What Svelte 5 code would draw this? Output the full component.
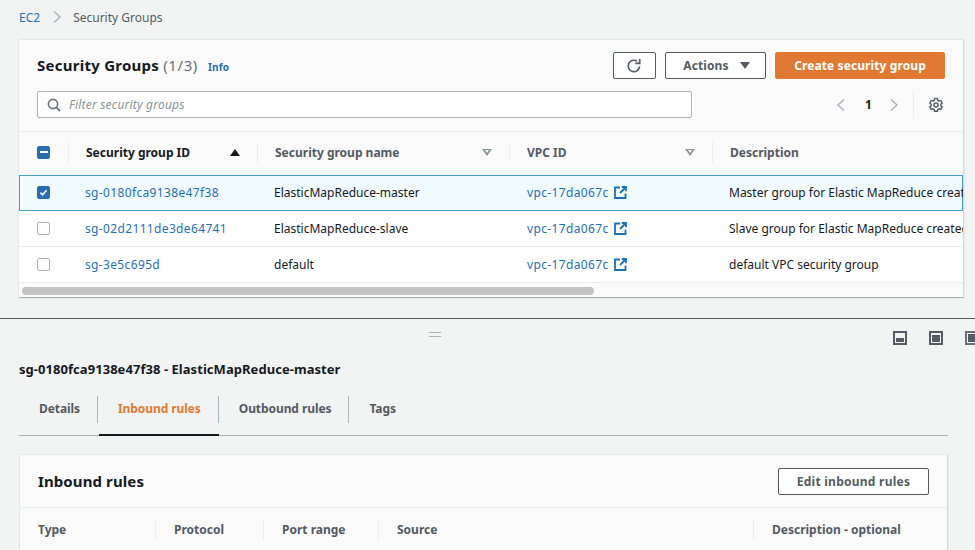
<script>
  const rows = [
    { id: 'sg-0180fca9138e47f38', name: 'ElasticMapReduce-master', desc: 'Master group for Elastic MapReduce created by EMR', sel: true },
    { id: 'sg-02d2111de3de64741', name: 'ElasticMapReduce-slave', desc: 'Slave group for Elastic MapReduce created by EMR', sel: false },
    { id: 'sg-3e5c695d', name: 'default', desc: 'default VPC security group', sel: false }
  ];
  const tabs = ['Details', 'Inbound rules', 'Outbound rules', 'Tags'];
</script>

<div class="page">
  <section class="upper">
    <nav class="crumbs">
      <a class="link" href="#ec2">EC2</a>
      <svg class="crumb-sep" width="10" height="14" viewBox="0 0 10 14"><path d="M2 1.5 8 7l-6 5.5" fill="none" stroke="#aab7b8" stroke-width="1.5"/></svg>
      <span>Security Groups</span>
    </nav>

    <div class="card">
      <header class="head">
        <div class="title-row">
          <h1>Security Groups <span class="count">(1/3)</span></h1>
          <a class="info" href="#info">Info</a>
          <div class="actions">
            <button class="btn icon-btn" aria-label="Refresh">
              <svg width="16" height="16" viewBox="0 0 16 16"><path d="M13.6 8.4A5.7 5.7 0 1 1 11 3.2" fill="none" stroke="#545b64" stroke-width="1.7"/><path d="M13.7 1v4.4H9.3" fill="none" stroke="#545b64" stroke-width="1.7"/></svg>
            </button>
            <button class="btn actions-btn">Actions <i class="tri"></i></button>
            <button class="btn primary">Create security group</button>
          </div>
        </div>
        <div class="filter-row">
          <label class="filter">
            <svg width="14" height="14" viewBox="0 0 14 14"><circle cx="6" cy="6" r="4.6" fill="none" stroke="#687078" stroke-width="1.6"/><path d="m9.5 9.5 3.6 3.6" stroke="#687078" stroke-width="1.8"/></svg>
            <span>Filter security groups</span>
          </label>
          <div class="pager">
            <svg width="10" height="14" viewBox="0 0 10 14"><path d="M8 1.5 2 7l6 5.5" fill="none" stroke="#aab7b8" stroke-width="1.6"/></svg>
            <b>1</b>
            <svg width="10" height="14" viewBox="0 0 10 14"><path d="M2 1.5 8 7l-6 5.5" fill="none" stroke="#aab7b8" stroke-width="1.6"/></svg>
            <span class="pager-sep"></span>
            <svg class="gear" width="16" height="16" viewBox="0 0 16 16"><path d="M6.6 1.6h2.8l.4 1.8 1.3.7 1.7-.6 1.4 2.5-1.3 1.2v1.5l1.3 1.2-1.4 2.5-1.7-.6-1.3.7-.4 1.8H6.6l-.4-1.8-1.3-.7-1.7.6-1.4-2.5 1.3-1.2V7.2L1.8 6l1.4-2.5 1.7.6 1.3-.7z" fill="none" stroke="#545b64" stroke-width="1.5" stroke-linejoin="round"/><circle cx="8" cy="8" r="2" fill="none" stroke="#545b64" stroke-width="1.5"/></svg>
          </div>
        </div>
      </header>

      <div class="table">
        <div class="thead grid">
          <div class="th check"><span class="box on"><i class="dash"></i></span></div>
          <div class="th sorted"><span>Security group ID</span><i class="tri black"></i></div>
          <div class="th"><span>Security group name</span><i class="tri hollow"></i></div>
          <div class="th"><span>VPC ID</span><i class="tri hollow"></i></div>
          <div class="th"><span>Description</span></div>
        </div>
        {#each rows as r}
          <div class="tr grid" class:selected={r.sel}>
            <div class="td check">
              {#if r.sel}
                <span class="box on"><svg width="13" height="13" viewBox="0 0 14 14"><path d="m3 7.2 2.8 2.8L11 4" fill="none" stroke="#fff" stroke-width="2"/></svg></span>
              {:else}
                <span class="box"></span>
              {/if}
            </div>
            <div class="td"><a class="link id" href="#sg">{r.id}</a></div>
            <div class="td">{r.name}</div>
            <div class="td vpc">
              <a class="link id" href="#vpc">vpc-17da067c</a>
              <svg width="13" height="13" viewBox="0 0 13 13"><path d="M6 1.5H1v10.5h10.5V7.5" fill="none" stroke="#1f6fb5" stroke-width="1.8"/><path d="M7.8 1H12v4.2M12 1 6 7" fill="none" stroke="#1f6fb5" stroke-width="1.8"/></svg>
            </div>
            <div class="td desc">{r.desc}</div>
          </div>
        {/each}
        <div class="scroll"><div class="thumb"></div></div>
      </div>
    </div>
  </section>

  <section class="lower">
    <div class="handle"></div>
    <div class="modes">
      <span class="mode m1"><i></i></span>
      <span class="mode m2"><i></i></span>
      <span class="mode m3"><i></i></span>
    </div>
    <h2>sg-0180fca9138e47f38 - ElasticMapReduce-master</h2>
    <div class="tabs">
      {#each tabs as t, i}
        <div class="tab" class:active={i === 1}>{t}</div>
      {/each}
    </div>
    <div class="card2">
      <div class="head2">
        <h3>Inbound rules</h3>
        <button class="btn edit">Edit inbound rules</button>
      </div>
      <div class="thead2">
        <div class="c2">Type</div>
        <div class="c2">Protocol</div>
        <div class="c2">Port range</div>
        <div class="c2">Source</div>
        <div class="c2">Description - optional</div>
      </div>
    </div>
  </section>
</div>

<style>
  :global(body) { margin: 0; background: #f2f3f3; }
  .page {
    width: 975px; height: 550px; overflow: hidden;
    font-family: "Noto Sans", "Open Sans", sans-serif;
    font-size: 12px; color: #16191f; background: #f2f3f3;
  }
  .link { color: #1f6fb5; text-decoration: none; }
  .id { letter-spacing: .35px; }
  .upper { height: 319px; box-sizing: border-box; padding-left: 19px; border-bottom: 1px solid #545b64; }
  .crumbs { height: 40px; display: flex; align-items: center; gap: 11px; color: #545b64; padding-bottom: 6px; box-sizing: border-box; }
  .crumb-sep { margin: 0 0 0 1px; }
  .card {
    width: 945px; height: 258px; background: #fff; overflow: hidden;
    border-right: 1px solid #d5dbdb;
    border-bottom: 1px solid #aab7b8;
    box-shadow: 0 0 1px #aab7b8; box-sizing: border-box;
  }
  .head { background: #fafafa; height: 92px; padding: 12px 18px 0; box-sizing: border-box; border-bottom: 1px solid #eaeded; }
  .title-row { display: flex; align-items: center; height: 27px; }
  h1 { margin: 0; font-size: 15px; font-weight: 700; line-height: 27px; letter-spacing: .25px; }
  .count { font-weight: 400; color: #687078; letter-spacing: .6px; }
  .info { margin: 3px 0 0 10px; font-size: 10px; font-weight: 700; color: #1f6fb5; text-decoration: none; letter-spacing: .2px; }
  .actions { margin-left: auto; display: flex; gap: 9px; }
  .btn {
    height: 27px; box-sizing: border-box; border: 1px solid #545b64; border-radius: 2px;
    background: #fff; color: #545b64; font: 700 12px "Noto Sans", sans-serif; padding: 0; letter-spacing: .1px;
    display: flex; align-items: center; justify-content: center;
  }
  .icon-btn { width: 43px; padding-right: 2px; }
  .actions-btn { width: 101px; gap: 11px; padding-left: 2px; }
  .primary { width: 170px; background: #e07a33; border-color: #e07a33; color: #fff; }
  .tri { width: 0; height: 0; border-left: 5px solid transparent; border-right: 5px solid transparent; border-top: 7px solid #545b64; display: inline-block; }
  .tri.black { border-top: 0; border-bottom: 7px solid #16191f; }
  .tri.hollow { position: relative; border-top-color: #879596; }
  .tri.hollow::after { content: ""; position: absolute; left: -2px; top: -5.5px; border-left: 2px solid transparent; border-right: 2px solid transparent; border-top: 3px solid #fafafa; }
  .filter-row { display: flex; align-items: center; margin-top: 12px; }
  .filter {
    flex: none; width: 655px; height: 27px; box-sizing: border-box; background: #fff; border: 1px solid #aab7b8; border-radius: 2px;
    display: flex; align-items: center; gap: 8px; padding-left: 9px; font-style: italic; color: #879596; letter-spacing: .2px;
  }
  .pager { margin-left: 144px; display: flex; align-items: center; height: 27px; }
  .pager b { margin: 0 17px 0 19px; font-size: 12px; color: #16191f; }
  .pager-sep { width: 1px; height: 27px; background: #eaeded; margin: 0 14px 0 14px; }
  .grid { display: grid; grid-template-columns: 49px 189px 252px 203px 251px; }
  .thead { height: 44px; background: #fafafa; border-bottom: 1px solid #eaeded; box-sizing: border-box; align-items: center; padding-bottom: 3px; }
  .th {
    height: 21px; display: flex; align-items: center; justify-content: space-between; box-sizing: border-box;
    padding: 0 17px 0 17px; border-left: 1px solid #eaeded; font-weight: 700; color: #545b64;
  }
  .th.sorted { color: #16191f; }
  .th.check, .td.check { border: 0; padding: 0 0 0 18px; justify-content: flex-start; }
  .box {
    width: 13px; height: 13px; border: 1px solid #aab7b8; border-radius: 2px; background: #fff;
    display: flex; align-items: center; justify-content: center; box-sizing: border-box;
  }
  .box.on { background: #2b6cb0; border-color: #2b6cb0; }
  .dash { width: 8px; height: 2px; background: #fff; }
  .tr { height: 36px; box-sizing: border-box; border-bottom: 1px solid #eaeded; background: #fff; align-items: center; padding-bottom: 1px; }
  .tr.selected { margin-top: -1px; padding-bottom: 2px; background: #f1faff; border-bottom: 0; box-shadow: inset 0 0 0 1px #44a1cd; }
  .td { padding-left: 17px; display: flex; align-items: center; white-space: nowrap; overflow: hidden; box-sizing: border-box; }
  .vpc { gap: 5px; padding-left: 18px; }
  .scroll { height: 15px; background: #fafafa; padding: 4px 3px; box-sizing: border-box; }
  .thumb { width: 572px; height: 8px; background: #c4c4c4; border-radius: 4px; }

  .lower { position: relative; padding-left: 19px; }
  .handle { position: absolute; left: 429px; top: 13px; width: 12px; height: 3px; border-top: 1px solid #aab7b8; border-bottom: 1px solid #aab7b8; }
  .modes { position: absolute; top: 12px; left: 893px; display: flex; gap: 22px; }
  .mode { width: 14px; height: 14px; box-sizing: border-box; border: 2px solid #545b64; display: block; position: relative; background: #f2f3f3; flex: none; }
  .mode i { position: absolute; left: 1px; right: 1px; background: #545b64; }
  .m1 i { bottom: 1px; height: 4px; }
  .m2 i { bottom: 1px; top: 2px; }
  .m3 i { top: 1px; bottom: 1px; }
  .m3 { border-color: #687078; }
  h2 { margin: 0; padding-top: 41px; font-size: 13px; line-height: 18px; font-weight: 700; color: #16191f; letter-spacing: .05px; }
  .tabs { display: flex; margin-top: 10px; width: 929px; height: 48px; box-sizing: border-box; border-bottom: 1px solid #aab7b8; }
  .tab { height: 47px; padding: 13px 18px 0 20px; box-sizing: border-box; font-weight: 700; color: #545b64; position: relative; line-height: 16px; letter-spacing: -.08px; }
  .tab::after { content: ""; position: absolute; right: 0; top: 8px; height: 27px; width: 1px; background: #aab7b8; }
  .tab:last-child::after { display: none; }
  .tab.active { color: #e07a33; }
  .tab.active::before { content: ""; position: absolute; left: 1px; right: 0; bottom: -1px; height: 2px; background: #16191f; }
  .card2 { margin: 19px 0 0 1px; width: 927px; height: 120px; background: #fafafa; border-right: 1px solid #d5dbdb; box-shadow: 0 0 1px #aab7b8; }
  .head2 { height: 53px; display: flex; align-items: center; justify-content: space-between; padding: 0 18px; border-bottom: 1px solid #eaeded; box-sizing: border-box; }
  h3 { margin: 0; font-size: 15px; font-weight: 700; letter-spacing: .1px; }
  .edit { width: 151px; letter-spacing: .25px; }
  .thead2 { display: grid; grid-template-columns: 135px 108px 115px 375px 1fr; align-items: center; height: 43px; }
  .c2 { height: 21px; line-height: 21px; padding-left: 18px; border-left: 1px solid #eaeded; font-weight: 700; color: #545b64; }
  .c2:first-child { border-left: 0; }
</style>
